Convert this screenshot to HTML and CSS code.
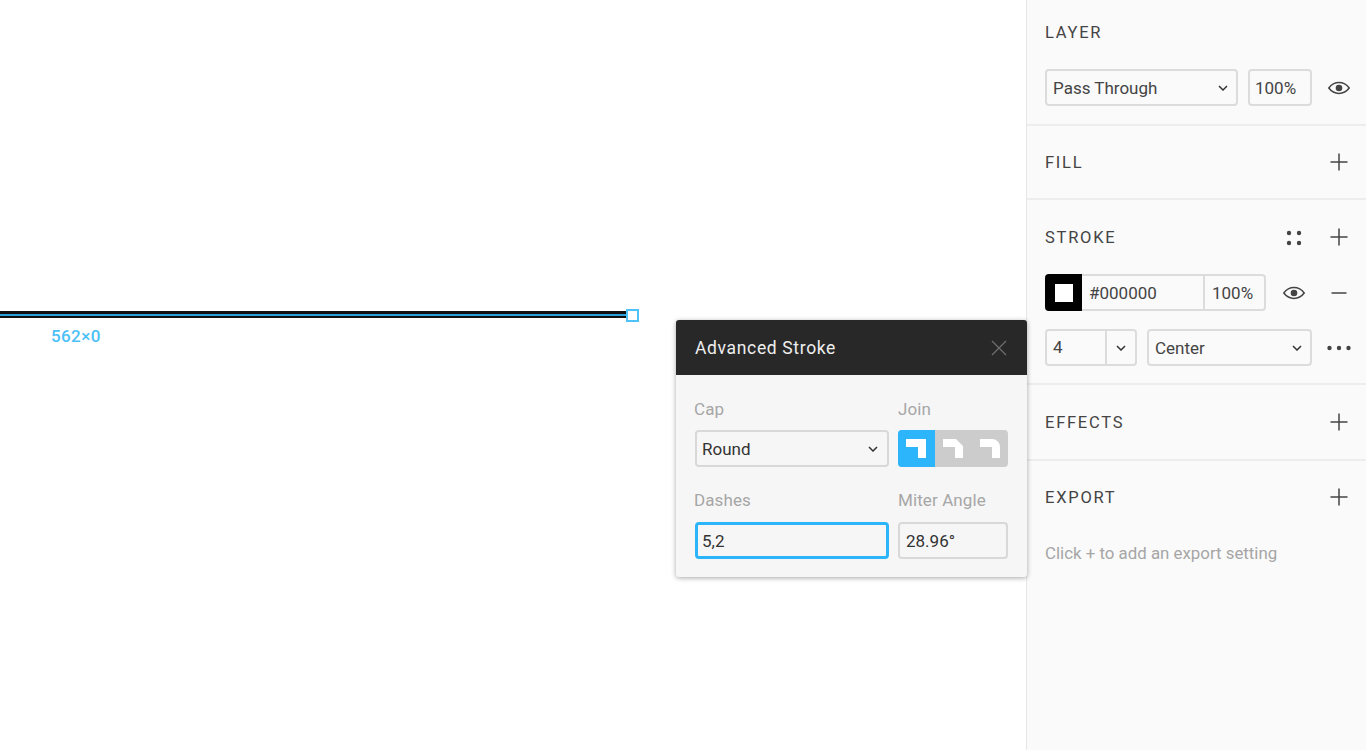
FILE: index.html
```html
<!DOCTYPE html>
<html lang="en">
<head>
    <meta charset="UTF-8">
    <title>Advanced Stroke</title>
    <link rel="stylesheet" href="styles.css">
</head>
<body>
    <svg class="defs" width="0" height="0">
        <symbol id="plus" viewBox="0 0 24 24"><path d="M12 3.500v17M3.500 12h17" fill="none" stroke="#444" stroke-width="1.500"/></symbol>
        <symbol id="minus" viewBox="0 0 24 24"><path d="M4.500 12h15" fill="none" stroke="#444" stroke-width="1.500"/></symbol>
        <symbol id="eye" viewBox="0 0 24 24"><path d="M1.800 12C4.500 8.400 8 6.600 12 6.600s7.500 1.800 10.200 5.400C19.500 15.600 16 17.400 12 17.400S4.500 15.600 1.800 12z" fill="none" stroke="#444" stroke-width="1.500"/><circle cx="12" cy="12" r="3.300" fill="#444"/></symbol>
        <symbol id="chevron" viewBox="0 0 10 6"><path d="M1 1l4 4 4-4" fill="none" stroke="#333" stroke-width="1.500"/></symbol>
    </svg>

    <div class="canvas">
        <div class="line"><div class="line-core"></div></div>
        <div class="handle"></div>
        <div class="size-label">562×0</div>

        <div class="popup">
            <div class="popup-header">
                <span>Advanced Stroke</span>
                <svg class="popup-close" width="16" height="16" viewBox="0 0 16 16"><path d="M1 1l14 14M15 1L1 15" fill="none" stroke="#6e6e6e" stroke-width="1.300"/></svg>
            </div>
            <div class="popup-body">
                <div class="popup-col-wide">
                    <div class="popup-label">Cap</div>
                    <div class="field select">Round <svg class="chevron"><use href="#chevron"/></svg></div>
                    <div class="popup-label second">Dashes</div>
                    <div class="field focused">5,2</div>
                </div>
                <div class="popup-col-narrow">
                    <div class="popup-label">Join</div>
                    <div class="join">
                        <div class="join-btn active"><svg width="20" height="19" viewBox="0 0 20 19"><path d="M0 0H20V19H12V8H0Z" fill="#fff"/></svg></div>
                        <div class="join-btn"><svg width="20" height="19" viewBox="0 0 20 19"><path d="M0 0H13L20 7V19H12V8H0Z" fill="#fff"/></svg></div>
                        <div class="join-btn"><svg width="20" height="19" viewBox="0 0 20 19"><path d="M0 0H12A8 8 0 0 1 20 8V19H12V8H0Z" fill="#fff"/></svg></div>
                    </div>
                    <div class="popup-label second">Miter Angle</div>
                    <div class="field">28.96°</div>
                </div>
            </div>
        </div>
    </div>

    <div class="panel">
        <div class="section first">
            <div class="section-title"><span>LAYER</span></div>
            <div class="row">
                <div class="field select w-blend">Pass Through <svg class="chevron"><use href="#chevron"/></svg></div>
                <div class="field w-opacity">100%</div>
                <svg class="icon push"><use href="#eye"/></svg>
            </div>
        </div>

        <div class="section fill">
            <div class="section-title"><span>FILL</span><svg class="icon push"><use href="#plus"/></svg></div>
        </div>

        <div class="section stroke">
            <div class="section-title">
                <span>STROKE</span>
                <svg class="icon push" viewBox="0 0 24 24"><g fill="#444"><circle cx="7" cy="8" r="2.200"/><circle cx="17" cy="8" r="2.200"/><circle cx="7" cy="18" r="2.200"/><circle cx="17" cy="18" r="2.200"/></g></svg>
                <svg class="icon gap-left"><use href="#plus"/></svg>
            </div>
            <div class="row">
                <div class="color-field">
                    <div class="swatch"><div class="swatch-inner"></div></div>
                    <div class="color-hex">#000000</div>
                    <div class="color-pct">100%</div>
                </div>
                <svg class="icon eye-stroke"><use href="#eye"/></svg>
                <svg class="icon gap-left"><use href="#minus"/></svg>
            </div>
            <div class="row row-second">
                <div class="weight-field">
                    <div class="weight-value">4</div>
                    <div class="weight-arrow"><svg class="chevron"><use href="#chevron"/></svg></div>
                </div>
                <div class="field select w-align">Center <svg class="chevron"><use href="#chevron"/></svg></div>
                <svg class="icon push" viewBox="0 0 24 24"><g fill="#444"><circle cx="2.500" cy="12" r="2.200"/><circle cx="12" cy="12" r="2.200"/><circle cx="21.500" cy="12" r="2.200"/></g></svg>
            </div>
        </div>

        <div class="section">
            <div class="section-title"><span>EFFECTS</span><svg class="icon push"><use href="#plus"/></svg></div>
        </div>

        <div class="section last">
            <div class="section-title"><span>EXPORT</span><svg class="icon push"><use href="#plus"/></svg></div>
            <div class="hint">Click + to add an export setting</div>
        </div>
    </div>
</body>
</html>
```

FILE: styles.css
```css
* {
    box-sizing: border-box;
}
body {
    margin: 0;
    height: 750px;
    display: flex;
    overflow: hidden;
    font-family: Roboto, "Liberation Sans", sans-serif;
    font-size: 17px;
    color: #444;
    background-color: #fff;
}
.defs {
    position: absolute;
}

/* canvas */
.canvas {
    position: relative;
    width: 1026px;
    flex: none;
    z-index: 1;
}
.line {
    position: absolute;
    left: 0;
    top: 311px;
    width: 628px;
    height: 7px;
    padding-top: 3px;
    background-color: #111;
}
.line-core {
    height: 2px;
    background-color: #2b9fd8;
}
.handle {
    position: absolute;
    left: 626px;
    top: 309px;
    width: 13px;
    height: 13px;
    background-color: #fff;
    border: 2px solid #4fc3f7;
}
.size-label {
    position: absolute;
    left: 51px;
    top: 326px;
    line-height: 20px;
    font-size: 17px;
    font-weight: 500;
    letter-spacing: 0.400px;
    color: #4dbff7;
}

/* popup */
.popup {
    position: absolute;
    left: 676px;
    top: 320px;
    width: 351px;
    height: 257px;
    border-radius: 3px;
    background-color: #f6f6f6;
    box-shadow: 0 1px 5px rgba(0, 0, 0, 0.35);
}
.popup-header {
    height: 55px;
    padding: 0 19px;
    display: flex;
    align-items: center;
    justify-content: space-between;
    background-color: #282828;
    color: #eee;
    border-radius: 3px 3px 0 0;
    font-size: 17.500px;
    letter-spacing: 0.650px;
}
.popup-close {
    margin-right: 1px;
}
.popup-body {
    display: flex;
    gap: 9px;
    padding: 23px 19px 0;
}
.popup-col-wide {
    width: 194px;
}
.popup-col-narrow {
    width: 110px;
}
.popup-label {
    height: 22px;
    line-height: 22px;
    margin-bottom: 10px;
    letter-spacing: 0.100px;
    color: #a6a6a6;
}
.popup-col-wide .popup-label {
    margin-left: -1px;
}
.popup-label.second {
    margin-top: 22px;
    margin-bottom: 11px;
}
.join {
    height: 37px;
    display: flex;
    overflow: hidden;
    border-radius: 4px;
    background-color: #ccc;
}
.join-btn {
    flex: 1;
    display: flex;
    align-items: center;
    justify-content: center;
}
.join-btn.active {
    background-color: #2cb5fb;
}

/* form bits */
.field {
    height: 37px;
    padding: 0 6px;
    display: flex;
    align-items: center;
    border: 2px solid #dcdcdc;
    border-radius: 4px;
}
.popup .field {
    padding: 0 5px;
    border-color: #d8d8d8;
    color: #333;
}
.popup-col-narrow .field {
    padding-left: 6px;
}
.popup .field.focused {
    padding: 0 4px;
    border: 3px solid #2cb5fb;
}
.popup .chevron {
    margin-right: 4px;
}
.select {
    justify-content: space-between;
}
.chevron {
    width: 10px;
    height: 6px;
    flex: none;
    margin-right: 2px;
}
.w-blend {
    width: 193px;
}
.w-opacity {
    width: 64px;
    padding: 0 5px;
}
.w-align {
    width: 165px;
}

/* side panel */
.panel {
    width: 340px;
    flex: none;
    border-left: 1px solid #e6e6e6;
    background-color: #fafafa;
}
.section {
    height: 76px;
    padding: 25px 15px 0 18px;
    border-bottom: 2px solid #ededed;
}
.section.first {
    height: 126px;
    padding-top: 20px;
}
.section.fill {
    height: 74px;
    padding-top: 24px;
}
.section.stroke {
    height: 185px;
}
.section.last {
    height: auto;
    padding-top: 24px;
    border-bottom: none;
}
.section-title {
    height: 24px;
    display: flex;
    align-items: center;
    letter-spacing: 1.750px;
    font-size: 16.500px;
}
.row {
    display: flex;
    align-items: center;
    gap: 10px;
    margin-top: 25px;
}
.row-second {
    margin-top: 18px;
}
.icon {
    width: 24px;
    height: 24px;
    flex: none;
}
.push {
    margin-left: auto;
}
.section-title .gap-left {
    margin-left: 21px;
}
.row .gap-left {
    margin-left: 11px;
}
.eye-stroke {
    margin-left: 6px;
}
.color-field {
    width: 221px;
    height: 37px;
    display: flex;
    border: 2px solid #dcdcdc;
    border-left: none;
    border-radius: 4px;
}
.swatch {
    width: 37px;
    height: 37px;
    margin-top: -2px;
    display: flex;
    align-items: center;
    justify-content: center;
    flex: none;
    border-radius: 4px 0 0 4px;
    background-color: #000;
}
.swatch-inner {
    width: 18px;
    height: 18px;
    background-color: #fff;
}
.color-hex {
    width: 123px;
    padding-left: 7px;
    line-height: 34px;
    border-right: 2px solid #dcdcdc;
}
.color-pct {
    padding-left: 7px;
    line-height: 34px;
}
.weight-field {
    width: 92px;
    height: 37px;
    display: flex;
    border: 2px solid #dcdcdc;
    border-radius: 4px;
}
.weight-value {
    width: 60px;
    padding-left: 6px;
    line-height: 33px;
    border-right: 2px solid #dcdcdc;
}
.weight-arrow {
    flex: 1;
    display: flex;
    align-items: center;
    justify-content: center;
}
.weight-arrow .chevron {
    margin: 0;
}
.hint {
    margin-top: 32px;
    line-height: 24px;
    font-size: 16.850px;
    color: #a6a6a6;
}
```
